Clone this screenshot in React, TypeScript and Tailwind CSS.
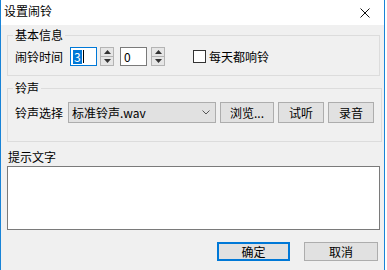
const font = { fontFamily: '"Noto Sans CJK SC", "Noto Sans", sans-serif' }

function Spin() {
  return (
    <div className="flex h-[19px] w-[14px] flex-col border border-[#b4b4b4] bg-[#e6e6e6]">
      <div className="flex flex-1 items-center justify-center border-b border-[#b4b4b4]">
        <svg width="7" height="4" viewBox="0 0 7 4">
          <path d="M3.5 0 L7 4 L0 4 Z" fill="#333" />
        </svg>
      </div>
      <div className="flex flex-1 items-center justify-center">
        <svg width="7" height="4" viewBox="0 0 7 4">
          <path d="M0 0 L7 0 L3.5 4 Z" fill="#333" />
        </svg>
      </div>
    </div>
  )
}

function Btn({ label, className = '' }: { label: string; className?: string }) {
  return (
    <div
      className={`flex h-[21px] items-center justify-center border border-[#adadad] bg-[#e1e1e1] text-[12px] leading-[14px] text-black ${className}`}
    >
      {label}
    </div>
  )
}

export default function App() {
  return (
    <div className="flex h-[270px] w-[387px] bg-white text-black" style={font}>
      <div className="flex h-full w-[385px] flex-col border-x border-[#1883d7] bg-[#f0f0f0]">
        {/* title bar */}
        <div className="flex h-[25px] shrink-0 items-start justify-between bg-white">
          <span className="pl-[3px] pt-[4px] text-[12px] leading-[14px]">设置闹铃</span>
          <svg className="mr-[14px] mt-[8px]" width="10" height="10" viewBox="0 0 10 10">
            <path d="M0.5 0.5 L9.5 9.5 M9.5 0.5 L0.5 9.5" stroke="#111" strokeWidth="1" />
          </svg>
        </div>

        <div className="flex flex-col pl-[6px] pr-[4px]">
          {/* 基本信息 */}
          <fieldset className="mt-[3px] w-[373px] border border-[#dcdcdc] px-[7px] pb-[9px]">
            <legend className="-ml-[2px] px-[2px] text-[12px] leading-[14px]">基本信息</legend>
            <div className="mt-[5px] flex h-[19px] items-center text-[12px] leading-[14px]">
              <span className="w-[48px]">闹铃时间</span>
              <div className="ml-[7px] flex h-[19px] w-[27px] items-center border border-[#0078d7] bg-white pl-[2px]">
                <span className="bg-[#0078d7] px-[1px] text-white">3</span>
                <span className="ml-[1px] h-[13px] w-[1px] bg-black" />
              </div>
              <div className="ml-[3px]">
                <Spin />
              </div>
              <div className="ml-[6px] flex h-[19px] w-[27px] items-center border border-[#7a7a7a] bg-white pl-[3px]">
                0
              </div>
              <div className="ml-[4px]">
                <Spin />
              </div>
              <div className="ml-[28px] h-[13px] w-[13px] border border-[#333] bg-white" />
              <span className="ml-[3px]">每天都响铃</span>
            </div>
          </fieldset>

          {/* 铃声 */}
          <fieldset className="mt-[5px] w-[373px] border border-[#dcdcdc] px-[7px] pb-[18px]">
            <legend className="-ml-[2px] px-[2px] text-[12px] leading-[14px]">铃声</legend>
            <div className="mt-[7px] flex h-[21px] items-center text-[12px] leading-[14px]">
              <span className="w-[48px]">铃声选择</span>
              <div className="ml-[5px] flex h-[21px] w-[148px] items-center justify-between border border-[#adadad] bg-[#e1e1e1] pl-[3px] pr-[5px]">
                <span>标准铃声.wav</span>
                <svg width="8" height="5" viewBox="0 0 8 5">
                  <path d="M0.5 0.5 L4 4 L7.5 0.5" stroke="#555" strokeWidth="1" fill="none" />
                </svg>
              </div>
              <Btn label="浏览..." className="ml-[4px] w-[54px]" />
              <Btn label="试听" className="ml-[4px] w-[46px]" />
              <Btn label="录音" className="ml-[4px] w-[46px]" />
            </div>
          </fieldset>

          {/* 提示文字 */}
          <span className="mt-[8px] pl-[1px] text-[12px] leading-[14px]">提示文字</span>
          <div className="mt-[2px] h-[64px] w-[373px] border border-[#7a7a7a] bg-white" />

          <div className="mt-[12px] flex w-[373px] justify-end pr-[2px]">
            <div className="flex h-[19px] w-[73px] items-center justify-center border-2 border-[#0078d7] bg-[#e1e1e1] text-[12px] leading-[14px]">
              确定
            </div>
            <div className="ml-[14px] flex h-[19px] w-[74px] items-center justify-center border border-[#adadad] bg-[#e1e1e1] text-[12px] leading-[14px]">
              取消
            </div>
          </div>
        </div>
      </div>
    </div>
  )
}
